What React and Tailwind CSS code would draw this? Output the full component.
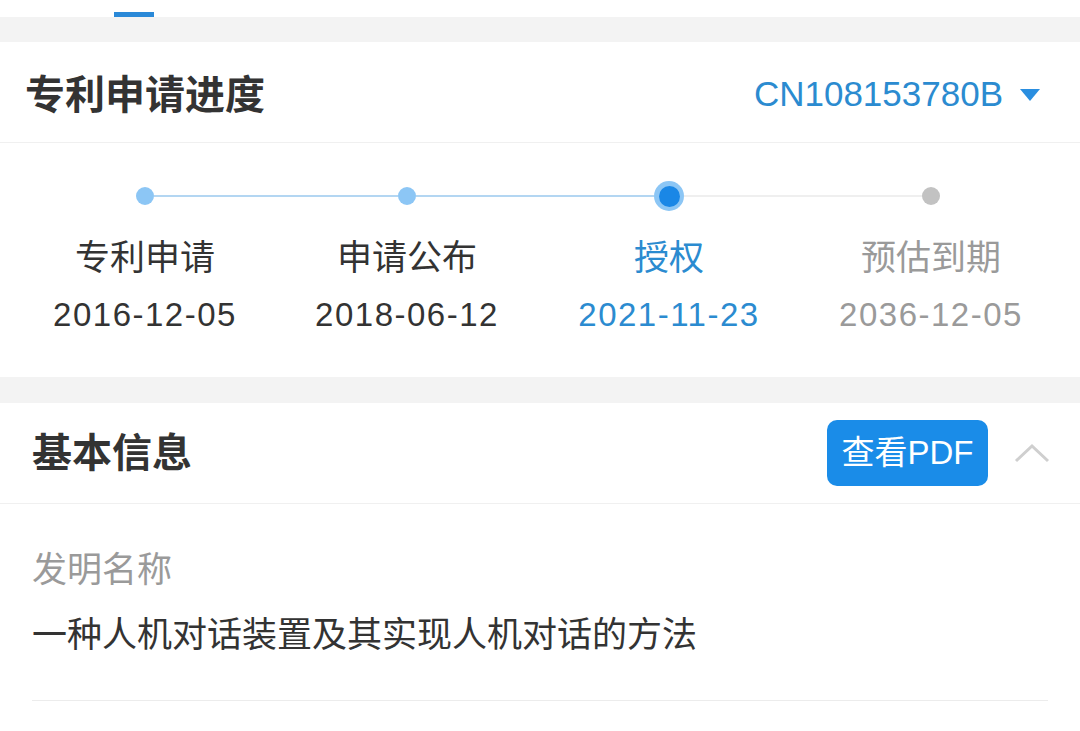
import React from "react";

const FONT = { fontFamily: '"Liberation Sans", "Noto Sans CJK SC", sans-serif' };

const steps = [
  { label: "专利申请", date: "2016-12-05", state: "done" },
  { label: "申请公布", date: "2018-06-12", state: "done" },
  { label: "授权", date: "2021-11-23", state: "active" },
  { label: "预估到期", date: "2036-12-05", state: "todo" },
];

function Step({ s, i }) {
  const leftColor =
    i === 0 ? "bg-transparent" : i <= 2 ? "bg-[#b3d6f2]" : "bg-[#efefef]";
  const rightColor =
    i === 3 ? "bg-transparent" : i < 2 ? "bg-[#b3d6f2]" : "bg-[#efefef]";
  const labelColor =
    s.state === "active" ? "text-[#2b8bd0]" : s.state === "todo" ? "text-[#9a9a9a]" : "text-[#333333]";
  return (
    <div className="flex flex-col items-center">
      <div className="flex h-[30px] w-full items-center">
        <div className={`h-[2px] flex-1 ${leftColor}`} />
        {s.state === "active" ? (
          <div className="flex h-[30px] w-[30px] items-center justify-center rounded-full bg-[#8cc6f5]">
            <div className="h-[21px] w-[21px] rounded-full bg-[#1a87e6]" />
          </div>
        ) : (
          <div
            className={`h-[18px] w-[18px] rounded-full ${
              s.state === "todo" ? "bg-[#c2c2c2]" : "bg-[#8cc6f5]"
            }`}
          />
        )}
        <div className={`h-[2px] flex-1 ${rightColor}`} />
      </div>
      <div className={`mt-[25px] text-[35px] leading-[44px] ${labelColor}`}>{s.label}</div>
      <div className={`mt-[13px] text-[33px] leading-[44px] tracking-[1.5px] ${labelColor}`}>
        {s.date}
      </div>
    </div>
  );
}

export default function App() {
  return (
    <div className="min-h-[731px] w-[1080px] bg-[#f3f3f3]" style={FONT}>
      {/* top tab strip */}
      <div className="h-[17px] bg-white">
        <div className="ml-[114px] pt-[12px]">
          <div className="h-[5px] w-[40px] bg-[#2a89d8]" />
        </div>
      </div>

      {/* progress card */}
      <div className="mt-[25px] bg-white">
        <div className="flex h-[101px] items-center justify-between border-b border-[#f0f0f0] pl-[25px] pr-[40px] pt-[5px]">
          <div className="text-[40px] font-bold text-[#333333]">专利申请进度</div>
          <div className="flex items-center gap-[17px]">
            <span className="text-[35px] text-[#2b8bd0]">CN108153780B</span>
            <svg width="20" height="12" viewBox="0 0 20 12">
              <polygon points="0,0 20,0 10,12" fill="#2a8ee0" />
            </svg>
          </div>
        </div>
        <div className="grid grid-cols-4 pb-[40px] pl-[14px] pr-[18px] pt-[38px]">
          {steps.map((s, i) => (
            <Step key={i} s={s} i={i} />
          ))}
        </div>
      </div>

      {/* basic info card */}
      <div className="mt-[26px] bg-white">
        <div className="flex h-[101px] items-center justify-between border-b border-[#f0f0f0] pl-[32px] pr-[30px]">
          <div className="text-[40px] font-bold text-[#333333]">基本信息</div>
          <div className="flex items-center gap-[26px]">
            <button className="flex h-[66px] w-[161px] items-center justify-center rounded-[10px] bg-[#1a8ce8] text-[33px] text-white">
              查看PDF
            </button>
            <svg width="36" height="20" viewBox="0 0 36 20">
              <polyline points="2,18 18,3 34,18" fill="none" stroke="#cfcfcf" strokeWidth="3" />
            </svg>
          </div>
        </div>
        <div className="px-[32px]">
          <div className="border-b border-[#ececec] pb-[43px] pt-[44px]">
            <div className="text-[35px] leading-[44px] text-[#9a9a9a]">发明名称</div>
            <div className="mt-[21px] text-[35px] leading-[44px] text-[#333333]">
              一种人机对话装置及其实现人机对话的方法
            </div>
          </div>
        </div>
        <div className="h-[40px]" />
      </div>
    </div>
  );
}
